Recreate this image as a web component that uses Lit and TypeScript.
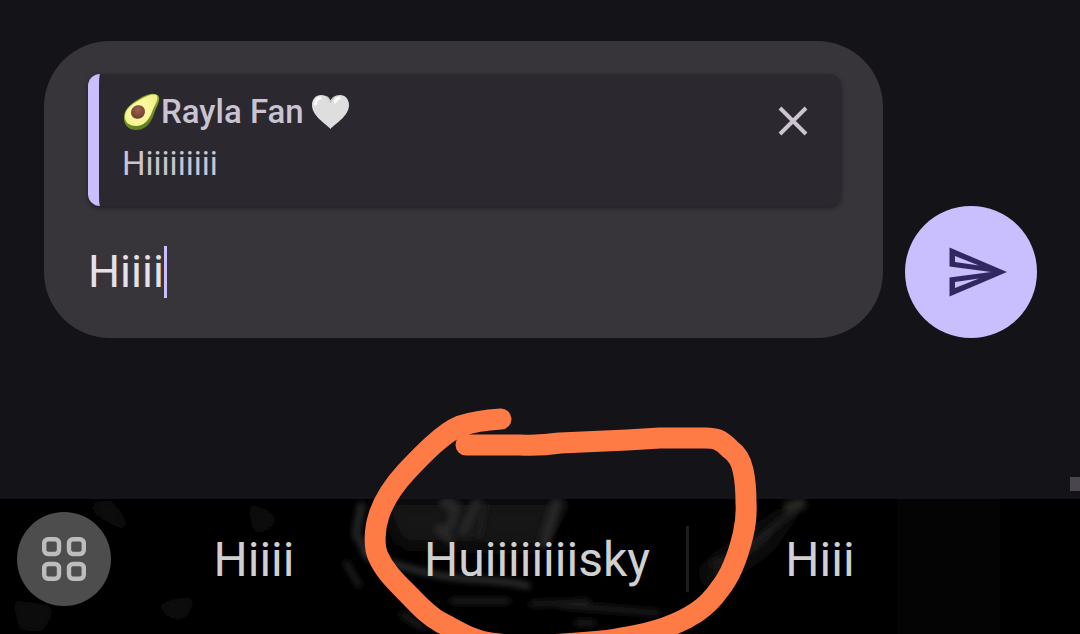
import { LitElement, html, svg, css } from "lit";
import { customElement, property, state } from "lit/decorators.js";

const avocado = svg`
  <svg class="emoji" viewBox="0 0 39 40" role="img" aria-label="avocado">
    <defs>
      <linearGradient id="skin" x1="0" y1="0" x2="0.4" y2="1">
        <stop offset="0.4" stop-color="#8fa32c" />
        <stop offset="1" stop-color="#5c7d22" />
      </linearGradient>
      <radialGradient id="flesh" cx="0.45" cy="0.5" r="0.6">
        <stop offset="0.4" stop-color="#fdf9a0" />
        <stop offset="1" stop-color="#eff08a" />
      </radialGradient>
      <radialGradient id="pit" cx="0.6" cy="0.35" r="0.7">
        <stop offset="0" stop-color="#9b6248" />
        <stop offset="1" stop-color="#6b3d2e" />
      </radialGradient>
    </defs>
    <path fill="url(#skin)" d="M36.500 4C33 0 26 2 20 5C12 10 3 15 2 24C1 32 6 38 14 38C24 38 29 31 32 22C34 15 39 9 36.500 4Z" />
    <path fill="url(#flesh)" d="M35 3.500C32 1 26 3 20 6.500C12 11 4 16 3 23C2 30 7 34 14 34C22 34 27 28 30 20C32 14 37 8 35 3.500Z" />
    <ellipse cx="16" cy="20" rx="7.200" ry="6.600" transform="rotate(-35 16 20)" fill="url(#pit)" />
  </svg>`;

const heart = svg`
  <svg class="emoji" viewBox="0 0 39 40" role="img" aria-label="white heart">
    <path fill="#dedede" d="M18.500 37C13 31 0 24 0 13C0 7 4 3 9 3C14 3 17 6 18.500 9C20 6 23 3 28 3C33 3 37 7 37 13C37 24 24 31 18.500 37Z" />
    <path fill="none" stroke="#c6c6c6" stroke-width="1.500" d="M14.500 4.500Q18 7 18.500 11Q19 8 22 5" />
    <path fill="none" stroke="#fbfbfb" stroke-width="3" stroke-linecap="round" d="M3.500 12Q4 7 8 6M23 10Q24 7 27 6" />
  </svg>`;

@customElement("reply-preview")
class ReplyPreview extends LitElement {
  @property() author = "";
  @property() message = "";

  static styles = css`
    :host {
      display: flex;
      align-items: flex-start;
      box-sizing: border-box;
      height: 132px;
      padding-right: 24px;
      border-left: 11px solid #c9bfff;
      border-radius: 12px;
      background: #2b2830;
      box-shadow: 0 2px 5px rgba(0, 0, 0, 0.4);
    }
    .quote {
      flex: 1;
      min-width: 0;
      padding: 12px 0 0 23px;
      color: #c9c4d0;
      font-size: 33px;
      line-height: 52px;
    }
    .author {
      display: flex;
      align-items: center;
      font-weight: 500;
      white-space: pre;
    }
    .message {
      margin: 0;
    }
    .emoji {
      width: 39px;
      height: 40px;
    }
    .close {
      width: 48px;
      height: 48px;
      margin-top: 23px;
      padding: 0;
      border: 0;
      background: none;
      color: #cac5cf;
    }
    .cross {
      display: block;
      width: 48px;
      height: 48px;
    }
  `;

  render() {
    return html`
      <div class="quote">
        <div class="author">${avocado}<span>${this.author} </span>${heart}</div>
        <p class="message">${this.message}</p>
      </div>
      <button class="close" aria-label="Cancel reply">
        <svg class="cross" viewBox="0 0 48 48">
          <path d="M11 11L37 37M37 11L11 37" stroke="currentColor" stroke-width="3.900" />
        </svg>
      </button>
    `;
  }
}

@customElement("suggestion-bar")
class SuggestionBar extends LitElement {
  @property({ attribute: false }) words: string[] = [];

  static styles = css`
    :host {
      display: flex;
      align-items: center;
      position: relative;
      padding: 13px 129px 28px 17px;
      background: #000;
    }
    .wallpaper {
      position: absolute;
      left: 0;
      top: 0;
      width: 100%;
      height: 100%;
    }
    .handle {
      position: absolute;
      right: 0;
      top: -22px;
      width: 10px;
      height: 14px;
      background: #49474d;
    }
    .apps {
      position: relative;
      flex: none;
      width: 94px;
      height: 94px;
      margin-right: 9px;
      padding: 0;
      border: 0;
      border-radius: 50%;
      background: #4d4d4d;
      color: #bdbdbd;
    }
    .grid-icon {
      display: block;
      width: 44px;
      height: 44px;
      margin: 0 auto;
    }
    .words {
      position: relative;
      flex: 1;
      display: grid;
      grid-template-columns: 268fr 298fr 3px 262fr;
      align-items: center;
    }
    .word {
      padding: 2px 0 0;
      border: 0;
      background: none;
      color: #d0d0d0;
      font-family: inherit;
      font-size: 48px;
      line-height: 62px;
    }
    .divider {
      height: 66px;
      background: #1e1e1e;
    }
  `;

  render() {
    const [first, second, third] = this.words;
    return html`
      <svg class="wallpaper" viewBox="0 0 1080 135" preserveAspectRatio="xMidYMid slice" aria-hidden="true">
        <defs>
          <filter id="soft" x="-10%" y="-30%" width="120%" height="160%"><feGaussianBlur stdDeviation="3" /></filter>
          <filter id="haze" x="-10%" y="-30%" width="120%" height="160%"><feGaussianBlur stdDeviation="9" /></filter>
        </defs>
        <g filter="url(#haze)" fill="#0a0a0a">
          <path d="M75 5L110 0L140 35L120 30ZM245 0L285 20L255 40ZM10 100L60 108L40 135L20 130ZM145 105L205 95L180 125Z" />
          <path d="M380 0H570L540 50L400 46Z" fill="#161616" />
          <path d="M700 70L800 0H805L770 50L710 90Z" fill="#121212" />
        </g>
        <rect x="897" width="103" height="135" fill="#040404" />
        <g filter="url(#soft)" fill="none" stroke-width="7">
          <path stroke="#2b2b2b" d="M362 4L356 35L372 62M440 5Q458 -4 454 16T436 28L452 42M478 0L462 36" />
          <path stroke="#282828" stroke-width="11" d="M558 0L543 48M446 6L460 12" />
          <path stroke="#3a3a3a" stroke-width="5" d="M362 53Q420 77 470 80T530 88" />
          <path stroke="#1d1d1d" stroke-width="6" d="M345 62L360 88M400 114L425 130M450 102H510M530 105L590 103M560 106L660 114M575 124H595M485 4L478 38M710 66L745 52L800 6" />
          <path stroke="#252523" stroke-width="12" d="M785 10L805 3" />
        </g>
      </svg>
      <span class="handle"></span>
      <button class="apps" aria-label="Keyboard tools">
        <svg class="grid-icon" viewBox="0 0 44 44" fill="none" stroke="currentColor" stroke-width="4.400">
          <rect x="2.200" y="2.200" width="14.800" height="14.800" rx="4" />
          <rect x="27" y="2.200" width="14.800" height="14.800" rx="4" />
          <rect x="2.200" y="27" width="14.800" height="14.800" rx="4" />
          <rect x="27" y="27" width="14.800" height="14.800" rx="4" />
        </svg>
      </button>
      <div class="words">
        <button class="word">${first}</button>
        <button class="word">${second}</button>
        <span class="divider"></span>
        <button class="word">${third}</button>
      </div>
    `;
  }
}

@customElement("app-root")
class AppRoot extends LitElement {
  @state() draft = "Hiiii";

  static styles = css`
    :host {
      display: flex;
      flex-direction: column;
      position: relative;
      min-height: 100vh;
      overflow: hidden;
      background: #141318;
      font-family: Roboto, sans-serif;
    }
    .compose {
      display: flex;
      align-items: flex-end;
      gap: 22px;
      padding: 41px 43px 40px 44px;
    }
    .bubble {
      flex: 1;
      min-width: 0;
      padding: 33px 42px 40px 44px;
      border-radius: 66px;
      background: #37343a;
    }
    .entry {
      display: flex;
      height: 52px;
      margin-top: 40px;
    }
    .draft {
      field-sizing: content;
      min-width: 0;
      padding: 0;
      border: 0;
      outline: 0;
      background: none;
      color: #e6e1e9;
      font-family: inherit;
      font-size: 45px;
      line-height: 52px;
    }
    .caret {
      flex: none;
      width: 3px;
      background: #c9bfff;
    }
    .send {
      flex: none;
      width: 132px;
      height: 132px;
      padding: 0;
      border: 0;
      border-radius: 50%;
      background: #c9bfff;
      color: #31285f;
    }
    .plane {
      display: block;
      width: 132px;
      height: 132px;
    }
    .suggestions {
      margin-top: auto;
    }
    .marker {
      position: absolute;
      left: 0;
      top: 0;
      width: 1080px;
      height: 634px;
      pointer-events: none;
    }
  `;

  private onInput(e: Event) {
    this.draft = (e.target as HTMLInputElement).value;
  }

  render() {
    return html`
      <section class="compose">
        <div class="bubble">
          <reply-preview author="Rayla Fan" message="Hiiiiiiiii"></reply-preview>
          <div class="entry">
            <input class="draft" aria-label="Message" .value=${this.draft} @input=${this.onInput} />
            <span class="caret"></span>
          </div>
        </div>
        <button class="send" aria-label="Send">
          <svg class="plane" viewBox="0 0 132 132">
            <path fill="currentColor" fill-rule="evenodd"
              d="M44.500 41.500L102 66L44.500 90.500V71.500L86 66L44.500 60.500ZM50 50V56L74 59.500ZM50 82V76L74 72.500Z" />
          </svg>
        </button>
      </section>
      <suggestion-bar class="suggestions" .words=${["Hiiii", "Huiiiiiiiisky", "Hiii"]}></suggestion-bar>
      <svg class="marker" viewBox="0 0 1080 634" aria-hidden="true">
        <path fill="none" stroke="#ff7b45" stroke-width="21" stroke-linecap="round" stroke-linejoin="round"
          d="M501 419C484 420 472 422 460 426C443 433 422 455 406 472C394 485 384 500 379 515C374 530 374 547 378 556C384 570 394 580 405 591C418 604 427 615 440 622C456 630 470 640 490 643C520 648 600 643 627 637C652 633 676 626 697 612Q710 603 719 590C733 573 739 552 743 535Q747 518 746 503Q746 483 743 470Q740 456 730 449C720 439 716 438 705 438H660L627 440L560 443Q540 446 520 445L466 445" />
      </svg>
    `;
  }
}
